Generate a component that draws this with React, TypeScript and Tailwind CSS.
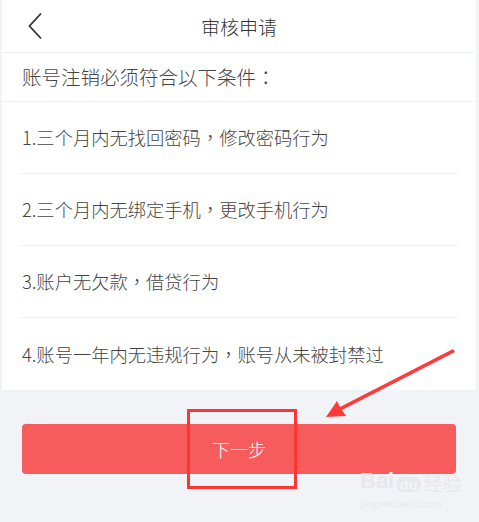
import React from "react";

const items = [
  "1.三个月内无找回密码，修改密码行为",
  "2.三个月内无绑定手机，更改手机行为",
  "3.账户无欠款，借贷行为",
  "4.账号一年内无违规行为，账号从未被封禁过",
];

export default function App() {
  return (
    <div
      className="relative w-[479px] h-[522px] overflow-hidden bg-[#f2f3f6] pl-[2px] pr-[3px]"
      style={{ fontFamily: '"Noto Sans CJK TC", "Noto Sans", sans-serif' }}
    >
      <div className="bg-white">
        <div className="relative flex h-[53px] items-center justify-center border-b border-[#eef0f3]">
          <svg className="absolute left-[25px] top-[12px]" width="18" height="28" viewBox="0 0 18 28">
            <path d="M14 1.5 L2.5 14 L14 26.5" fill="none" stroke="#333" strokeWidth="1.8" />
          </svg>
          <span className="text-[19px] font-light text-[#333] leading-none">审核申请</span>
        </div>
        <div className="flex h-[49px] items-center border-b border-[#eef0f3] pl-[20px] text-[19.5px] font-light text-[#444] leading-none">
          账号注销必须符合以下条件：
        </div>
        {items.map((t, i) => (
          <div key={i} className="px-[18px]">
            <div
              className={
                "flex h-[72px] items-center pl-[2px] text-[18.3px] font-light text-[#444] leading-none " +
                (i < items.length - 1 ? "border-b border-[#eef0f3]" : "")
              }
            >
              {t}
            </div>
          </div>
        ))}
      </div>
      <div className="mt-[34px] ml-[20px] mr-[20px] flex h-[50px] items-center justify-center rounded-[4px] bg-[#f75c5c] text-[18px] font-light text-white leading-none">
        下一步
      </div>

      {/* annotation box */}
      <div className="absolute left-[187px] top-[409px] h-[80px] w-[110px] border-[3px] border-[#ff3535]" />
      {/* annotation arrow */}
      <svg className="absolute left-0 top-0" width="479" height="522" viewBox="0 0 479 522">
        <polygon points="453,349 455,352 342,410 346,416 326,417 337,401 340,407" fill="#ff3a3a" />
      </svg>
      {/* watermark */}
      <div className="absolute left-[360px] top-[470px] flex flex-col items-start text-[#e6e8ec]">
        <div className="flex items-end leading-none">
          <span className="text-[22px] font-bold" style={{ fontFamily: '"Liberation Sans", sans-serif' }}>Bai</span>
          <span className="ml-[2px] rounded-full bg-[#e6e8ec] px-[3px] text-[15px] font-bold text-[#f2f3f6]" style={{ fontFamily: '"Liberation Sans", sans-serif' }}>du</span>
          <span className="ml-[3px] text-[19px]">经验</span>
        </div>
        <span className="mt-[6px] text-[11px] leading-none" style={{ fontFamily: '"Liberation Serif", serif' }}>jingyan.baidu.com</span>
      </div>
    </div>
  );
}
